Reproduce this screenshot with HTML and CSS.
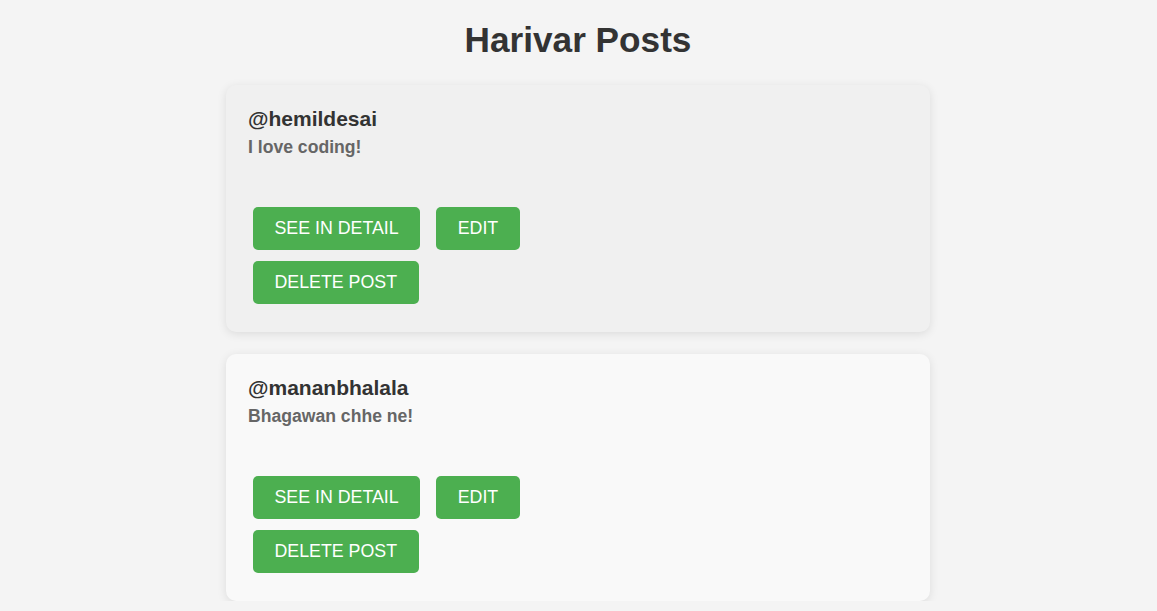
FILE: index.html
```html
<!DOCTYPE html>
<html>
<head>
<meta charset="utf-8">
<link rel="stylesheet" href="styles.css">
</head>
<body>
<h1 class="title">Harivar Posts</h1>
<div class="list">
  <div class="card card-active">
    <div class="user">@hemildesai</div>
    <div class="desc">I love coding!</div>
    <div class="actions">
      <button class="btn">SEE IN DETAIL</button>
      <button class="btn">EDIT</button>
      <button class="btn">DELETE POST</button>
    </div>
  </div>
  <div class="card">
    <div class="user">@mananbhalala</div>
    <div class="desc">Bhagawan chhe ne!</div>
    <div class="actions">
      <button class="btn">SEE IN DETAIL</button>
      <button class="btn">EDIT</button>
      <button class="btn">DELETE POST</button>
    </div>
  </div>
</div>
</body>
</html>
```
FILE: styles.css
```css
html, body {
  margin: 0;
  padding: 0;
  background: #f4f4f4;
  font-family: "Liberation Sans", Arial, sans-serif;
  color: #333;
}
body {
  padding-right: 1px;
}
.title {
  margin: 0;
  padding-top: 20px;
  text-align: center;
  font-size: 35.2px;
  line-height: 40px;
  font-weight: bold;
  color: #333;
}
.list {
  width: 704px;
  margin: 25px auto 0;
  display: flex;
  flex-direction: column;
  gap: 22px;
}
.card {
  background: #f9f9f9;
  border-radius: 10px;
  box-shadow: 0 2px 10px rgba(0,0,0,0.1);
  padding: 22px 22px 28px;
}
.card-active {
  background: #f0f0f0;
}
.user {
  font-size: 21px;
  line-height: 24px;
  font-weight: bold;
  color: #333;
}
.desc {
  margin-top: 6px;
  font-size: 17.6px;
  line-height: 20px;
  font-weight: bold;
  color: #666;
}
.actions {
  margin-top: 50px;
  display: flex;
  flex-wrap: wrap;
  width: 290px;
  column-gap: 16px;
  row-gap: 11px;
  padding-left: 5px;
}
.btn {
  background: #4caf50;
  color: #fff;
  border: none;
  border-radius: 5px;
  font-family: "Liberation Sans", Arial, sans-serif;
  font-size: 17.8px;
  line-height: 21px;
  padding: 11px 21.5px;
  height: 43px;
  cursor: pointer;
}
```
